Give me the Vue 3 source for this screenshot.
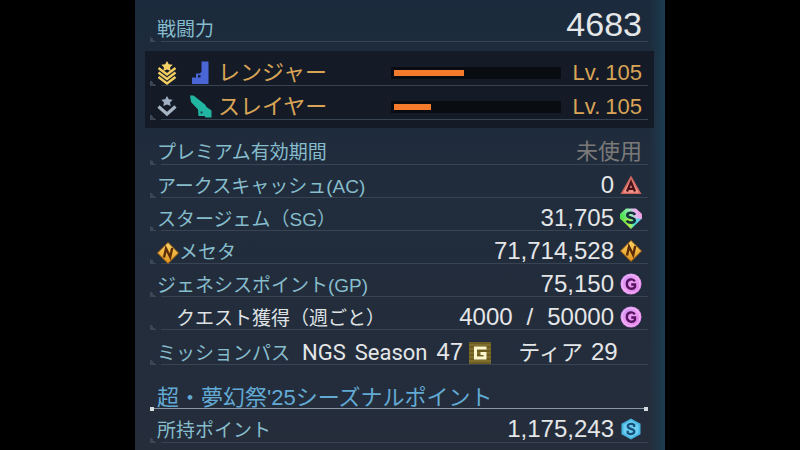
<script setup>
const power = '4683'

const classes = [
  { id: 'ranger', name: 'レンジャー', level: 105, progress: 43, main: true },
  { id: 'slayer', name: 'スレイヤー', level: 105, progress: 23, main: false }
]

const stats = [
  { id: 'premium', label: 'プレミアム有効期間', value: ['未使用'], muted: true },
  { id: 'ac', label: 'アークスキャッシュ(AC)', value: ['0'], icon: 'ac' },
  { id: 'sg', label: 'スタージェム（SG）', value: ['31,705'], icon: 'sg' },
  { id: 'meseta', label: 'メセタ', value: ['71,714,528'], icon: 'meseta', labelIcon: true },
  { id: 'gp', label: 'ジェネシスポイント(GP)', value: ['75,150'], icon: 'gp' },
  { id: 'quest', label: 'クエスト獲得（週ごと）', value: ['4000', '/', '50000'], icon: 'gp', sub: true }
]
</script>

<template>
  <!-- shared currency symbols -->
  <svg class="symbols" aria-hidden="true">
    <defs>
      <linearGradient id="gem" x1="0" y1="0.3" x2="1" y2="0.1">
        <stop offset="0" stop-color="#4fe052" />
        <stop offset="0.4" stop-color="#8ff0b4" />
        <stop offset="0.65" stop-color="#e9b5f2" />
        <stop offset="1" stop-color="#f08fd0" />
      </linearGradient>
      <linearGradient id="gemLow" x1="0" y1="0" x2="1" y2="0">
        <stop offset="0.1" stop-color="#5ee44a" />
        <stop offset="0.45" stop-color="#b4ec4c" />
        <stop offset="0.65" stop-color="#43e0d0" />
        <stop offset="1" stop-color="#8ab4f5" />
      </linearGradient>
      <linearGradient id="gold" x1="0" y1="0" x2="0" y2="1">
        <stop offset="0" stop-color="#ffd766" />
        <stop offset="1" stop-color="#e0921c" />
      </linearGradient>
      <linearGradient id="pink" x1="0" y1="0" x2="1" y2="1">
        <stop offset="0" stop-color="#c58cf8" />
        <stop offset="0.5" stop-color="#ee9cf4" />
        <stop offset="1" stop-color="#d870e6" />
      </linearGradient>
    </defs>
    <symbol id="icon-ac" viewBox="0 0 22 22">
      <path d="M11 1.5 21.5 20H.5Z" fill="#d0645e" />
      <path d="M11 4.5 19 18.800H3Z" fill="#ee9486" />
      <path d="M7 17.500 11 8l4 9.500M8.500 14.800h5" fill="none" stroke="#4c1218" stroke-width="2.300" />
    </symbol>
    <symbol id="icon-sg" viewBox="0 0 22 22">
      <path d="M6 1.500h10L22 7v5H0V7Z" fill="url(#gem)" />
      <path d="M0 11.500h22L11 22Z" fill="url(#gemLow)" />
      <path d="M15 7.800C13.500 5 7.300 5 7.300 8.200c0 3.200 7.400 1.800 7.400 5 0 3.200-6.400 3.200-7.900.3" fill="none" stroke="#143038" stroke-width="2.700" />
    </symbol>
    <symbol id="icon-meseta" viewBox="0 0 22 22">
      <path d="M11 .5 21.500 11 11 21.500.5 11Z" fill="url(#gold)" stroke="#9a5d12" />
      <path d="M7 15.500 9 6.500l4.200 8.500 2-9" fill="none" stroke="#5b2c08" stroke-width="2.400" />
    </symbol>
    <symbol id="icon-gp" viewBox="0 0 22 22">
      <circle cx="11" cy="11" r="10.500" fill="url(#pink)" />
      <circle cx="11" cy="11" r="9" fill="none" stroke="#f4bdfa" />
      <path d="M14.800 8.300C13 5.200 6.800 5.700 6.800 11c0 5.500 6.500 5.800 8.200 2.800v-2.300h-3.800" fill="none" stroke="#551360" stroke-width="2.400" />
    </symbol>
    <symbol id="icon-season" viewBox="0 0 22 22">
      <path d="M11 .5 20.500 5.800v10.400L11 21.500 1.500 16.200V5.800Z" fill="#48b5e2" />
      <path d="M11 2.500 18.500 7v8L11 19.500 3.500 15V7Z" fill="#6bcdf0" />
      <path d="M14.200 9V6.800C11.500 5 7.500 6 7.800 8.500c.3 2.800 6.400 2 6.500 5 .1 2.700-4 3.300-6.600 1.500v-2.200" fill="none" stroke="#15507a" stroke-width="2.200" />
    </symbol>
  </svg>

  <main class="status">
    <dl class="row power">
      <dt>戦闘力</dt>
      <dd class="power-value">{{ power }}</dd>
    </dl>

    <section class="classes">
      <div v-for="job in classes" :key="job.id" class="row class-row">
        <svg v-if="job.main" class="rank" viewBox="0 0 20 24" aria-hidden="true">
          <path d="m10 0 1.800 3.200 3.900.6-2.700 2.600.7 3.600-3.700-1.600L6.300 10l.7-3.600-2.700-2.600 3.900-.6Z" fill="#f5d268" />
          <path d="m1.500 7 8.500 6.500L18.500 7M1.500 11.500 10 18l8.500-6.500M1.500 16l8.500 6.500 8.500-6.500" fill="none" stroke="#f2ce62" stroke-width="2.400" />
        </svg>
        <svg v-else class="rank" viewBox="0 0 20 24" aria-hidden="true">
          <path d="m10 1 1.800 3.200 3.900.6-2.700 2.600.7 3.600-3.700-1.600L6.300 11l.7-3.600-2.700-2.600 3.900-.6Z" fill="#9faec2" />
          <path d="m1.500 11.500 8.500 7.500 8.500-7.500" fill="none" stroke="#a7b4c4" stroke-width="3.200" />
        </svg>

        <svg v-if="job.id === 'ranger'" class="weapon" viewBox="0 0 22 24" aria-hidden="true">
          <path d="M11.500 .5H18.500V23H2V16.500H6V12.500H9.500L11.500 11Z" fill="#4965d6" />
          <rect x="8" y="14" width="2.500" height="2.500" fill="#18233d" />
        </svg>
        <svg v-else class="weapon" viewBox="0 0 22 24" aria-hidden="true">
          <path d="M0 .5H3.500L15 9.500 16.500 12 21.500 15.500V22.500H15.500L14.500 21H8.500L8 14.500 1 7Z" fill="#21b5a2" />
          <rect x="10.500" y="16.500" width="2" height="2" fill="#17464e" />
        </svg>

        <span class="class-name">{{ job.name }}</span>
        <div class="bar" role="progressbar" :aria-label="job.name" :aria-valuenow="job.progress">
          <div class="bar-fill" :style="{ width: job.progress + '%' }"></div>
        </div>
        <span class="level"><span>Lv.</span><span>{{ job.level }}</span></span>
      </div>
    </section>

    <dl v-for="stat in stats" :key="stat.id" class="row">
      <dt :class="{ sub: stat.sub }">
        <svg v-if="stat.labelIcon" class="icon" aria-hidden="true"><use :href="'#icon-' + stat.icon" /></svg>
        <span class="label">{{ stat.label }}</span>
      </dt>
      <dd :class="{ muted: stat.muted }">
        <span class="amount"><span v-for="part in stat.value" :key="part">{{ part }}</span></span>
        <svg v-if="stat.icon" class="icon" aria-hidden="true"><use :href="'#icon-' + stat.icon" /></svg>
      </dd>
    </dl>

    <dl class="row pass">
      <dt>ミッションパス</dt>
      <dd>
        <span class="season"><span>NGS</span><span>Season</span><span class="number">47</span></span>
        <svg class="icon" viewBox="0 0 22 22" aria-hidden="true">
          <rect width="22" height="22" fill="#6d5c22" />
          <path d="M0 3h22M0 7h22M0 11h22M0 15h22M0 19h22" stroke="#94803a" />
          <path d="M16 7.500V6H6.500v10H16v-4.500h-4.500" fill="none" stroke="#fff6cf" stroke-width="3" />
        </svg>
        <span class="tier"><span>ティア</span><span class="number">29</span></span>
      </dd>
    </dl>

    <h2 class="heading">超・夢幻祭'25シーズナルポイント</h2>

    <dl class="row last">
      <dt>所持ポイント</dt>
      <dd>
        <span class="amount">1,175,243</span>
        <svg class="icon" aria-hidden="true"><use href="#icon-season" /></svg>
      </dd>
    </dl>
  </main>
</template>

<style>
body {
  margin: 0;
  background: #000;
}
</style>

<style scoped>
.symbols {
  position: absolute;
  width: 0;
  height: 0;
}

.status {
  box-sizing: border-box;
  width: 66.25%;
  min-height: 100vh;
  margin: 0 auto;
  padding: 0 17px 6px 15px;
  background:
    linear-gradient(90deg, transparent 97%, #1c3c50),
    linear-gradient(#1b2a3c, #202c3c 35%, #252d3b);
  color: #e4e6e8;
  font-family: "Liberation Sans", "Noto Sans CJK JP", sans-serif;
  font-size: 24px;
  line-height: 24px;
}

.row {
  box-sizing: border-box;
  display: flex;
  align-items: baseline;
  justify-content: space-between;
  height: 33px;
  margin: 0;
  padding: 8px 6px 0 7px;
  white-space: nowrap;
  background:
    linear-gradient(45deg, #3c4756 50%, transparent 50%) 0 100% / 6px 6px no-repeat,
    linear-gradient(#384454, #384454) 11px 100% / 100% 1px no-repeat;
}

dt {
  display: flex;
  align-items: center;
  color: #86bccb;
  font-size: 19px;
}

.label {
  align-self: baseline;
}

dd {
  display: flex;
  align-items: center;
  gap: 6px;
  margin: 0;
}

.amount {
  display: flex;
  gap: 14px;
}

.icon {
  width: 22px;
  height: 22px;
}

.sub {
  padding-left: 19px;
  color: #dfe2e4;
}

.muted {
  color: #7b7a79;
  font-size: 22px;
}

.power {
  height: 42px;
  padding-top: 7px;
}

.power-value {
  font-size: 34px;
  line-height: 34px;
}

.classes {
  margin: 9px -6px 4px -5px;
  padding: 1px 6px 8px 5px;
  background: #141b27;
}

.class-row {
  align-items: center;
  height: 34px;
  color: #d9a456;
}

.rank {
  width: 20px;
  height: 24px;
}

.weapon {
  width: 22px;
  height: 24px;
  margin: 0 6px 0 13px;
}

.class-name {
  flex: 1;
  font-size: 22px;
}

.bar {
  box-sizing: border-box;
  width: 35%;
  height: 12px;
  padding: 3px;
  background: #090c11;
}

.bar-fill {
  height: 6px;
  background: #f47b2c;
}

.level {
  display: flex;
  gap: 5px;
  margin-left: 12px;
  font-size: 22px;
}

.pass {
  height: 35px;
  padding-top: 10px;
  justify-content: flex-start;
  gap: 12px;
}

.season {
  display: flex;
  align-items: baseline;
  gap: 9px;
  font-family: Roboto, sans-serif;
  font-size: 22px;
}

.number {
  font-family: "Liberation Sans", sans-serif;
  font-size: 24px;
}

.tier {
  display: flex;
  align-items: baseline;
  gap: 8px;
  margin-left: 21px;
  font-size: 22px;
}

.heading {
  position: relative;
  box-sizing: border-box;
  height: 44px;
  margin: 0;
  padding: 21px 7px 0;
  border-bottom: 1px solid #8b96a3;
  color: #62a9d4;
  font-size: 22px;
  font-weight: 400;
  white-space: nowrap;
}

/* square end caps on the divider */
.heading::before,
.heading::after {
  content: "";
  position: absolute;
  bottom: -3px;
  left: 0;
  width: 4px;
  height: 4px;
  background: #d5dade;
}

.heading::after {
  right: 0;
  left: auto;
}

.last {
  height: 34px;
}
</style>
